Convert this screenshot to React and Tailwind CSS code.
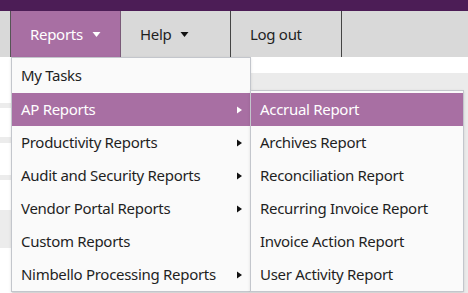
import { useState } from 'react'

const mainItems = [
    { label: 'My Tasks' },
    { label: 'AP Reports', sub: true, active: true },
    { label: 'Productivity Reports', sub: true },
    { label: 'Audit and Security Reports', sub: true },
    { label: 'Vendor Portal Reports', sub: true },
    { label: 'Custom Reports' },
    { label: 'Nimbello Processing Reports', sub: true },
]

const apItems = [
    'Accrual Report',
    'Archives Report',
    'Reconciliation Report',
    'Recurring Invoice Report',
    'Invoice Action Report',
    'User Activity Report',
]

const Caret = ({ white }) => (
    <svg width="7" height="8" viewBox="0 0 7 8" className="shrink-0">
        <path d="M1 0.5 L6 4 L1 7.5 Z" fill={white ? '#ffffff' : '#111111'} />
    </svg>
)

const Down = ({ white }) => (
    <svg width="9" height="7" viewBox="0 0 9 7" className="ml-[9px]">
        <path d="M0.5 1 L8.5 1 L4.5 6 Z" fill={white ? '#ffffff' : '#111111'} />
    </svg>
)

const App = () => {
    const [open] = useState(true)

    return (
        <div className="relative w-[468px] h-[293px] overflow-hidden bg-white font-['Noto_Sans','Liberation_Sans',sans-serif] tracking-[-0.3px] text-[#1f1f1f]">
            {/* top strip */}
            <div className="h-[11px] bg-[#4c1d56]" />

            {/* nav bar */}
            <div className="flex h-[46px] bg-[#d9d9d9] text-[15px]">
                <div className="w-[11px] border-r border-r-[#555]" />
                <div className="flex w-[110px] items-center pl-[19px] bg-[#a86fa3] text-white border-r border-r-[#7a5a78]">
                    Reports
                    <Down white />
                </div>
                <div className="flex w-[110px] items-center pl-[19px] border-r border-r-[#444]">
                    Help
                    <Down />
                </div>
                <div className="flex w-[111px] items-center pl-[19px] border-r border-r-[#444]">
                    Log out
                </div>
            </div>

            {/* page behind the menu */}
            <div className="h-[16px] bg-white" />
            <div className="flex h-[220px]">
                <div className="flex w-[12px] flex-col bg-white">
                    <div className="h-[30px]" />
                    <div className="h-[5px] bg-[#ececec]" />
                    <div className="h-[29px]" />
                    <div className="h-[6px] bg-[#ececec]" />
                    <div className="h-[32px]" />
                    <div className="h-[5px] bg-[#ececec]" />
                    <div className="h-[30px]" />
                    <div className="h-[38px] bg-[#ececec]" />
                </div>
                <div className="flex-1 bg-[#ebebeb]" />
            </div>

            {open && (
                <>
                    {/* main dropdown */}
                    <div className="absolute left-[11px] top-[57px] w-[240px] border border-[#c3c6cc] bg-[#fafafa] pt-[1px] text-[15px] shadow-sm">
                        {mainItems.map((item) => (
                            <div
                                key={item.label}
                                className={`flex h-[33px] items-center justify-between pl-[9px] pr-[7px] ${
                                    item.active
                                        ? 'mt-[1px] bg-[#a86fa3] text-white'
                                        : ''
                                }`}
                            >
                                <span>{item.label}</span>
                                {item.sub && <Caret white={item.active} />}
                            </div>
                        ))}
                    </div>

                    {/* AP Reports submenu */}
                    <div className="absolute left-[250px] top-[90px] w-[214px] border border-[#c3c6cc] bg-[#fafafa] pt-[2px] text-[15px] shadow-sm">
                        {apItems.map((label, i) => (
                            <div
                                key={label}
                                className={`flex h-[33px] items-center pl-[9px] ${
                                    i === 0 ? 'bg-[#a86fa3] text-white' : ''
                                }`}
                            >
                                {label}
                            </div>
                        ))}
                    </div>
                </>
            )}
        </div>
    )
}

export default App
